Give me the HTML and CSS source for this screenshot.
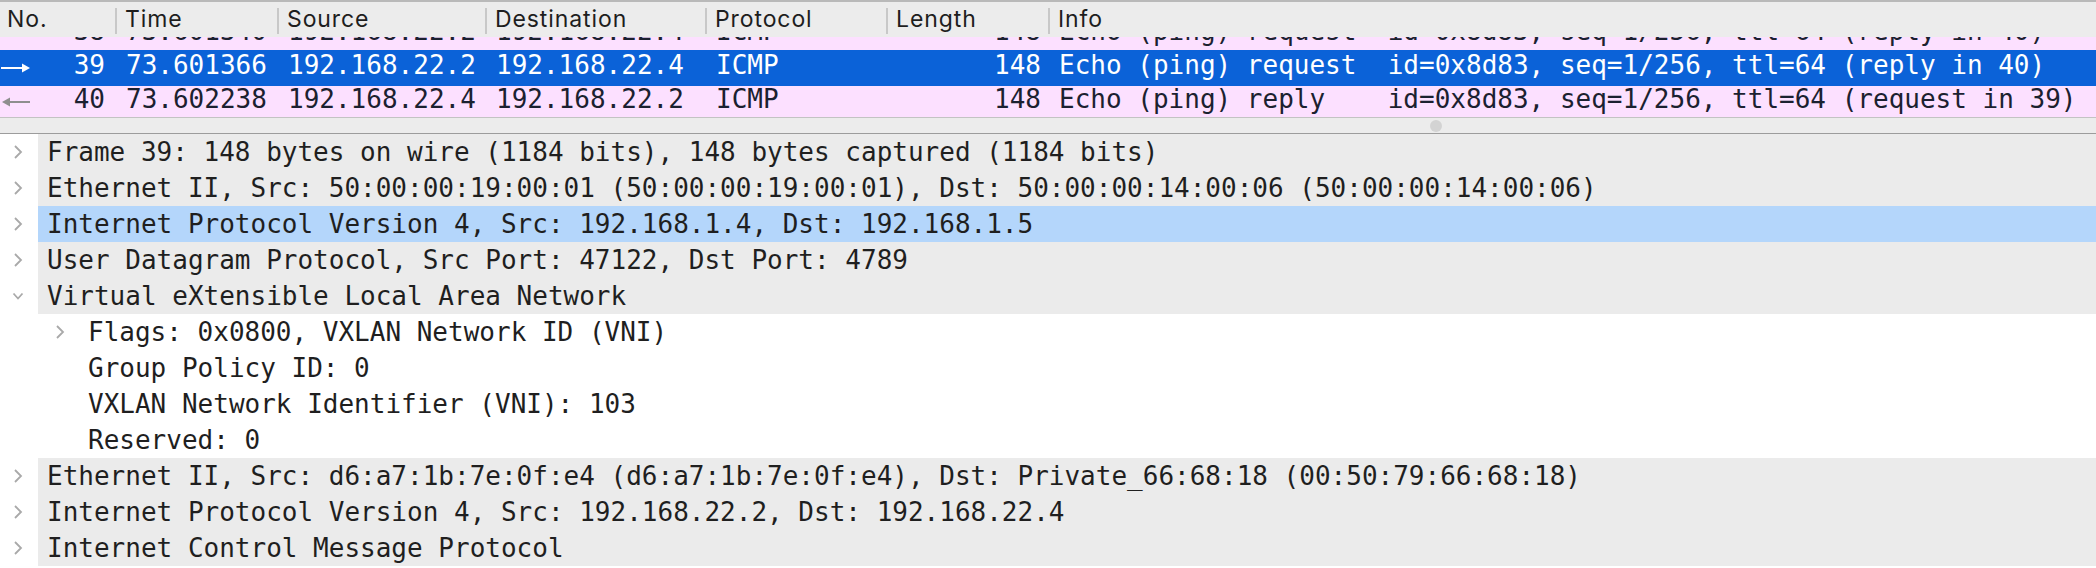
FILE: index.html
```html
<!DOCTYPE html>
<html>
<head>
<meta charset="utf-8">
<link rel="stylesheet" href="styles.css">
</head>
<body>
<div class="app">
  <section class="packet-list">
    <div class="list-header">
      <div class="hcell">No.</div>
      <div class="hcell sep">Time</div>
      <div class="hcell sep">Source</div>
      <div class="hcell sep">Destination</div>
      <div class="hcell sep">Protocol</div>
      <div class="hcell sep">Length</div>
      <div class="hcell sep">Info</div>
    </div>
    <div class="list-viewport">
      <div class="list-rows">
        <div class="prow icmp">
          <div class="pcell num"><span class="rel"></span>38</div>
          <div class="pcell">73.601340</div>
          <div class="pcell">192.168.22.2</div>
          <div class="pcell">192.168.22.4</div>
          <div class="pcell">ICMP</div>
          <div class="pcell num len">148</div>
          <div class="pcell">Echo (ping) request  id=0x8d83, seq=1/256, ttl=64 (reply in 40)</div>
        </div>
        <div class="prow selected">
          <div class="pcell num"><span class="rel">
            <svg width="32" height="12" viewBox="0 0 32 12"><path d="M1 6H28" stroke="#fff" stroke-width="2"/><path d="M22 1.5L30 6L22 10.5Z" fill="#fff"/></svg>
          </span>39</div>
          <div class="pcell">73.601366</div>
          <div class="pcell">192.168.22.2</div>
          <div class="pcell">192.168.22.4</div>
          <div class="pcell">ICMP</div>
          <div class="pcell num len">148</div>
          <div class="pcell">Echo (ping) request  id=0x8d83, seq=1/256, ttl=64 (reply in 40)</div>
        </div>
        <div class="prow icmp">
          <div class="pcell num"><span class="rel">
            <svg width="32" height="12" viewBox="0 0 32 12"><path d="M4 6H30" stroke="#8e8e8e" stroke-width="2"/><path d="M10 1.5L2 6L10 10.5Z" fill="#8e8e8e"/></svg>
          </span>40</div>
          <div class="pcell">73.602238</div>
          <div class="pcell">192.168.22.4</div>
          <div class="pcell">192.168.22.2</div>
          <div class="pcell">ICMP</div>
          <div class="pcell num len">148</div>
          <div class="pcell">Echo (ping) reply    id=0x8d83, seq=1/256, ttl=64 (request in 39)</div>
        </div>
      </div>
    </div>
    <div class="splitter"><span class="handle"></span></div>
  </section>

  <section class="details">
    <div class="node top">
      <span class="gutter"><svg class="chev" width="10" height="16" viewBox="0 0 10 16"><path d="M2 2L8 8L2 14" fill="none" stroke="#a9a9a9" stroke-width="1.8"/></svg></span>
      <span class="label">Frame 39: 148 bytes on wire (1184 bits), 148 bytes captured (1184 bits)</span>
    </div>
    <div class="node top">
      <span class="gutter"><svg class="chev" width="10" height="16" viewBox="0 0 10 16"><path d="M2 2L8 8L2 14" fill="none" stroke="#a9a9a9" stroke-width="1.8"/></svg></span>
      <span class="label">Ethernet II, Src: 50:00:00:19:00:01 (50:00:00:19:00:01), Dst: 50:00:00:14:00:06 (50:00:00:14:00:06)</span>
    </div>
    <div class="node top hl">
      <span class="gutter"><svg class="chev" width="10" height="16" viewBox="0 0 10 16"><path d="M2 2L8 8L2 14" fill="none" stroke="#a9a9a9" stroke-width="1.8"/></svg></span>
      <span class="label">Internet Protocol Version 4, Src: 192.168.1.4, Dst: 192.168.1.5</span>
    </div>
    <div class="node top">
      <span class="gutter"><svg class="chev" width="10" height="16" viewBox="0 0 10 16"><path d="M2 2L8 8L2 14" fill="none" stroke="#a9a9a9" stroke-width="1.8"/></svg></span>
      <span class="label">User Datagram Protocol, Src Port: 47122, Dst Port: 4789</span>
    </div>
    <div class="node top">
      <span class="gutter"><svg class="chev down" width="12" height="10" viewBox="0 0 12 10"><path d="M1.5 2.5L6 7.5L10.5 2.5" fill="none" stroke="#a9a9a9" stroke-width="1.8"/></svg></span>
      <span class="label">Virtual eXtensible Local Area Network</span>
    </div>
    <div class="node child">
      <span class="gutter"></span>
      <span class="label"><span class="cslot"><svg class="chev" width="10" height="16" viewBox="0 0 10 16"><path d="M2 2L8 8L2 14" fill="none" stroke="#a9a9a9" stroke-width="1.8"/></svg></span>Flags: 0x0800, VXLAN Network ID (VNI)</span>
    </div>
    <div class="node child">
      <span class="gutter"></span>
      <span class="label"><span class="cslot"></span>Group Policy ID: 0</span>
    </div>
    <div class="node child">
      <span class="gutter"></span>
      <span class="label"><span class="cslot"></span>VXLAN Network Identifier (VNI): 103</span>
    </div>
    <div class="node child">
      <span class="gutter"></span>
      <span class="label"><span class="cslot"></span>Reserved: 0</span>
    </div>
    <div class="node top">
      <span class="gutter"><svg class="chev" width="10" height="16" viewBox="0 0 10 16"><path d="M2 2L8 8L2 14" fill="none" stroke="#a9a9a9" stroke-width="1.8"/></svg></span>
      <span class="label">Ethernet II, Src: d6:a7:1b:7e:0f:e4 (d6:a7:1b:7e:0f:e4), Dst: Private_66:68:18 (00:50:79:66:68:18)</span>
    </div>
    <div class="node top">
      <span class="gutter"><svg class="chev" width="10" height="16" viewBox="0 0 10 16"><path d="M2 2L8 8L2 14" fill="none" stroke="#a9a9a9" stroke-width="1.8"/></svg></span>
      <span class="label">Internet Protocol Version 4, Src: 192.168.22.2, Dst: 192.168.22.4</span>
    </div>
    <div class="node top">
      <span class="gutter"><svg class="chev" width="10" height="16" viewBox="0 0 10 16"><path d="M2 2L8 8L2 14" fill="none" stroke="#a9a9a9" stroke-width="1.8"/></svg></span>
      <span class="label">Internet Control Message Protocol</span>
    </div>
  </section>
</div>
</body>
</html>
```

FILE: styles.css
```css
html, body {
  margin: 0;
  padding: 0;
  background: #ffffff;
}

.app {
  width: 2096px;
  height: 568px;
  overflow: hidden;
  display: flex;
  flex-direction: column;
}

/* ---------- packet list ---------- */
.packet-list {
  background: #ececec;
  flex: 0 0 auto;
}

.list-header,
.prow {
  display: grid;
  grid-template-columns: 116px 162px 208px 220px 181px 162px 1fr;
}

.list-header {
  height: 35px;
  border-top: 2px solid #b9b9b9;
  background: #ececec;
  font-family: Inter, "Liberation Sans", sans-serif;
  font-size: 23px;
  color: #1e1e1e;
  letter-spacing: 0.9px;
}

.hcell {
  position: relative;
  display: flex;
  align-items: center;
  padding-left: 9px;
  padding-bottom: 2px;
  white-space: nowrap;
}

.hcell:first-child {
  padding-left: 7px;
}

.hcell.sep::before {
  content: "";
  position: absolute;
  left: -1px;
  top: 6px;
  width: 2px;
  height: 26px;
  background: #c8c8c8;
}

.list-viewport {
  height: 80px;
  overflow: hidden;
  border-bottom: 1px solid #c3c3c3;
}

.list-rows {
  margin-top: -20px;
}

.prow {
  height: 34px;
  font-family: "DejaVu Sans Mono", "Liberation Mono", monospace;
  font-size: 26px;
  color: #1b2130;
  white-space: pre;
}

.prow.icmp {
  background: #fce0ff;
}

.prow.selected {
  position: relative;
  z-index: 1;
  background: #0b62d8;
  box-shadow: 0 -1px 0 #0b62d8, 0 1px 0 #0b62d8;
  color: #ffffff;
}

.pcell {
  display: flex;
  align-items: center;
  padding-left: 10px;
  padding-bottom: 6px;
  overflow: hidden;
}

.pcell.num {
  justify-content: flex-end;
  padding-left: 0;
  padding-right: 11px;
}

.pcell.len {
  padding-right: 8px;
}

.rel {
  margin-right: auto;
  display: flex;
  align-items: center;
  padding-top: 6px;
}

.splitter {
  height: 15px;
  border-bottom: 1px solid #9c9c9c;
  display: flex;
  align-items: center;
}

.handle {
  width: 12px;
  height: 12px;
  border-radius: 50%;
  background: #d3d3d3;
  margin-left: 1430px;
}

/* ---------- details tree ---------- */
.details {
  flex: 1 1 auto;
  font-family: "DejaVu Sans Mono", "Liberation Mono", monospace;
  font-size: 26px;
  color: #1f1f1f;
}

.node {
  display: grid;
  grid-template-columns: 38px 1fr;
  height: 36px;
  white-space: pre;
}

.gutter {
  display: flex;
  align-items: center;
  justify-content: center;
  background: #ffffff;
  padding-right: 2px;
}

.label {
  display: flex;
  align-items: center;
  padding-left: 9px;
}

.node.top .label {
  background: #ebebeb;
}

.node.hl .label {
  background: #b4d6fb;
}

.node.child .label {
  background: #ffffff;
}

.cslot {
  width: 41px;
  display: flex;
  align-items: center;
  justify-content: flex-start;
  padding-left: 8px;
  box-sizing: border-box;
  flex: 0 0 auto;
}
```
